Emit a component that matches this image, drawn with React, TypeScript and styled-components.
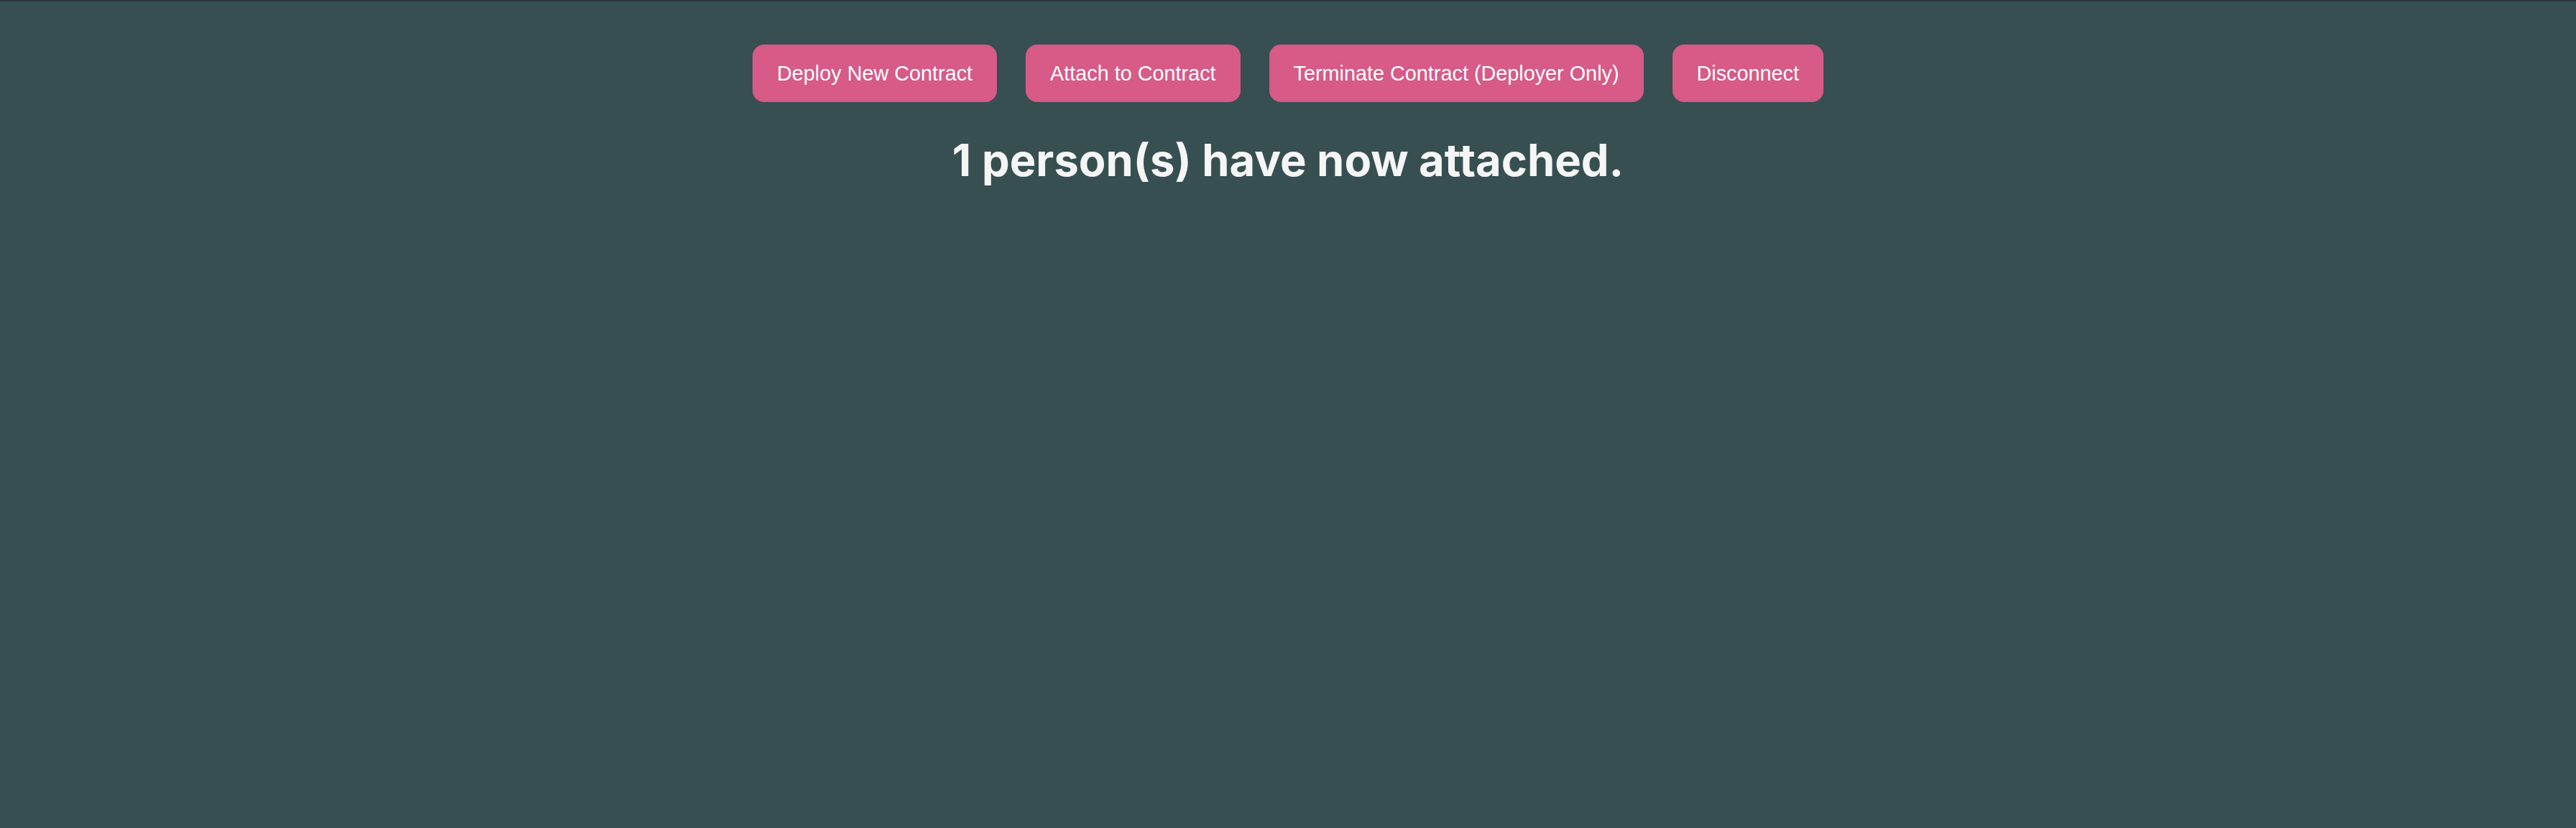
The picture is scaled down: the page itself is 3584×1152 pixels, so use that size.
import React from "react";
import styled, { createGlobalStyle } from "styled-components";

const GlobalStyle = createGlobalStyle`
  html, body {
    margin: 0;
    padding: 0;
    background: #374f51;
  }
  body {
    min-height: 100vh;
    border-top: 2px solid #2e3439;
    box-sizing: border-box;
    font-family: "Liberation Sans", Arial, sans-serif;
  }
`;

const Page = styled.main`
  display: flex;
  flex-direction: column;
  align-items: center;
  padding-top: 60px;
`;

const Toolbar = styled.div`
  display: flex;
  gap: 40px;
`;

const Button = styled.button`
  height: 80px;
  padding: 0 34px;
  border: none;
  border-radius: 16px;
  background: #d75a87;
  color: #ffffff;
  font-family: "Liberation Sans", Arial, sans-serif;
  font-size: 28.8px;
  cursor: pointer;
`;

const Heading = styled.h1`
  margin: 43px 0 0;
  color: #f5f5f5;
  font-family: Inter, "Noto Sans", sans-serif;
  font-weight: 700;
  font-size: 61.5px;
  line-height: 75px;
`;

export default function App() {
  return (
    <>
      <GlobalStyle />
      <Page>
        <Toolbar>
          <Button>Deploy New Contract</Button>
          <Button>Attach to Contract</Button>
          <Button>Terminate Contract (Deployer Only)</Button>
          <Button>Disconnect</Button>
        </Toolbar>
        <Heading>1 person(s) have now attached.</Heading>
      </Page>
    </>
  );
}
